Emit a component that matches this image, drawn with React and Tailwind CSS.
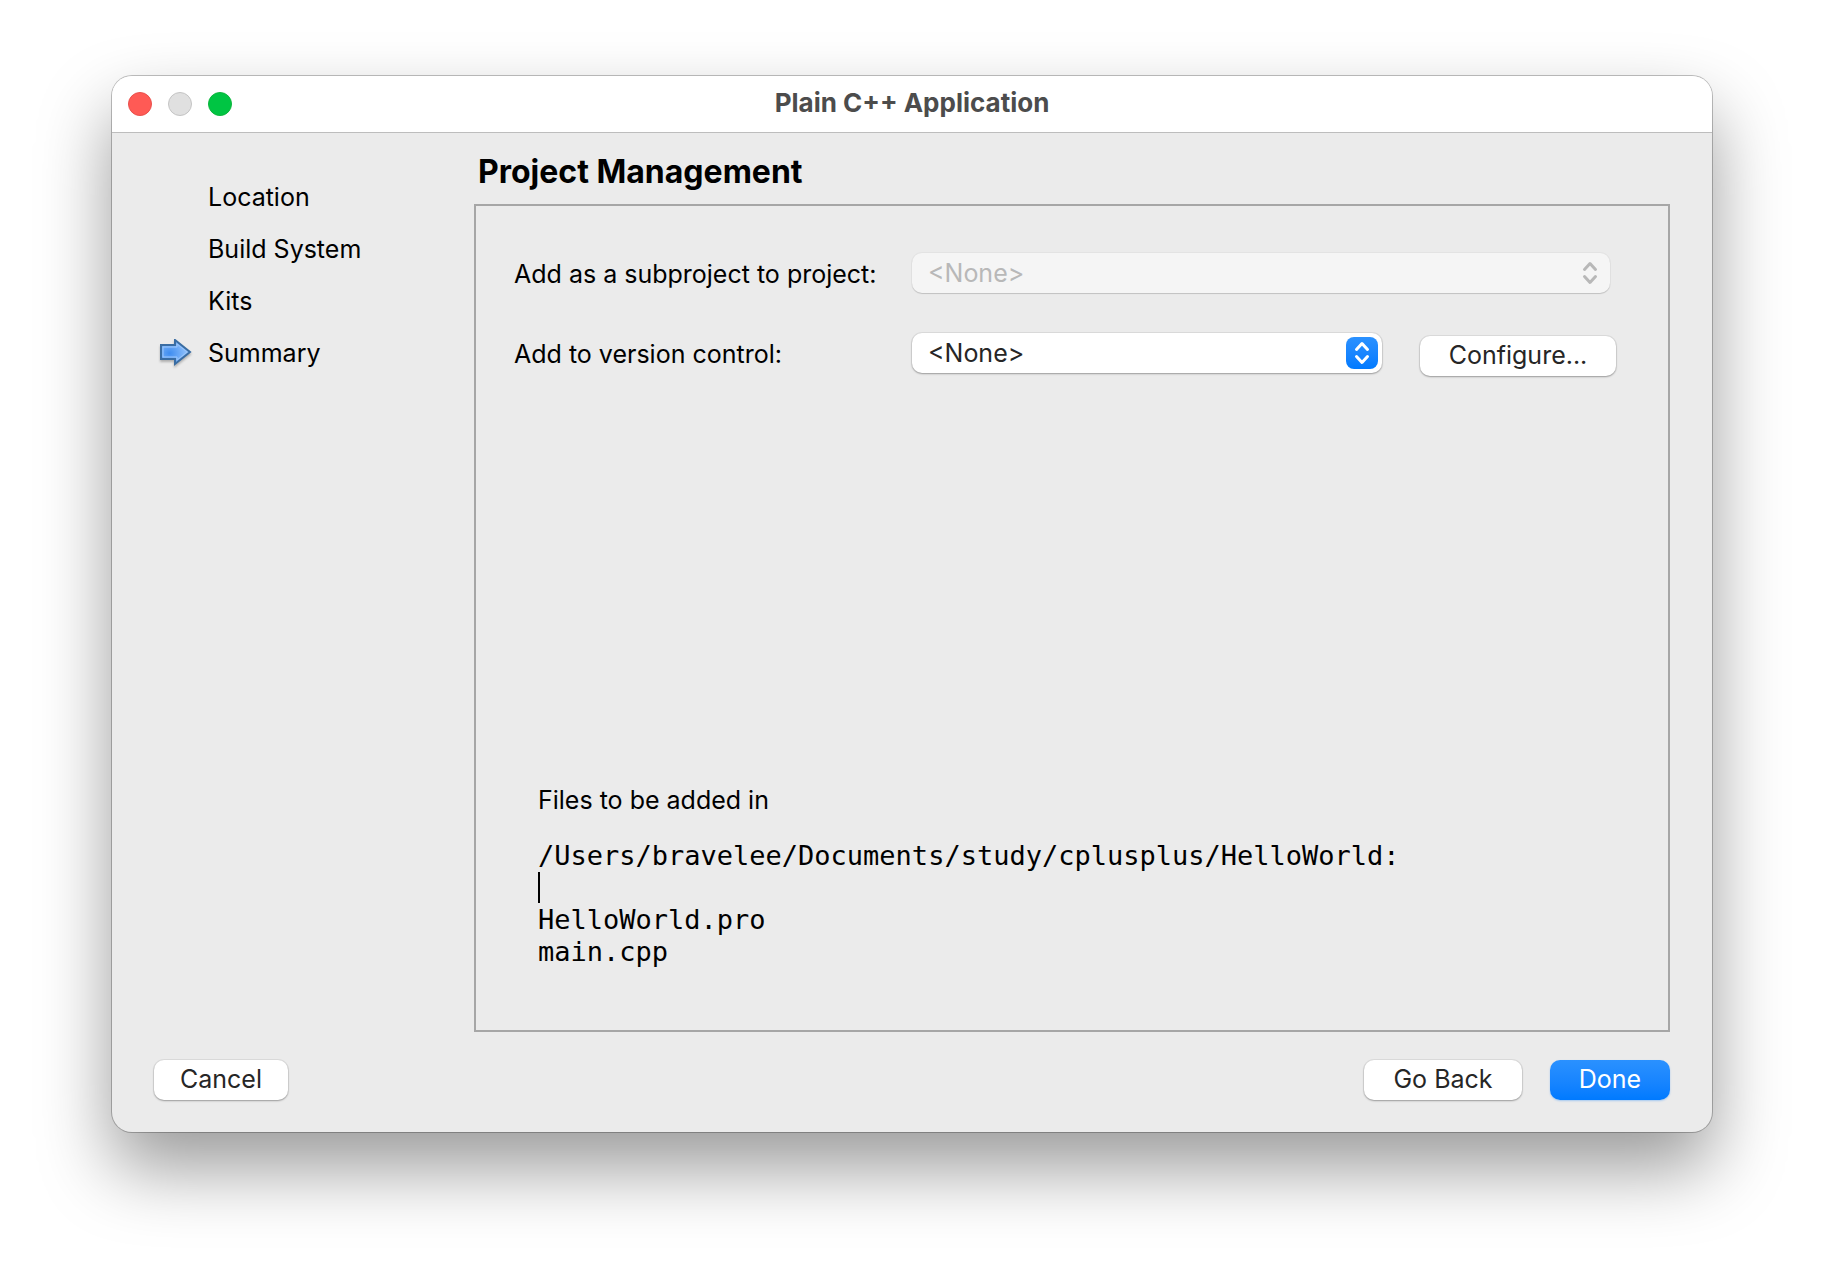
import { useState } from "react";

const STEPS = ["Location", "Build System", "Kits", "Summary"];

const FILES = ["HelloWorld.pro", "main.cpp"];

function StepArrow() {
  return (
    <svg viewBox="0 0 32 28" className="h-7 w-8 drop-shadow-[0_2px_1px_rgba(0,0,0,0.25)]" aria-hidden="true">
      <defs>
        <radialGradient id="arrowFill" cx="0.3" cy="0.55" r="0.6">
          <stop offset="0" stopColor="#3f8df0" />
          <stop offset="1" stopColor="#8fc0fb" />
        </radialGradient>
      </defs>
      <path d="M1 6H15V1L30 13L15 25V20H1Z" fill="url(#arrowFill)" stroke="#3a6da3" strokeWidth="2" />
      <path d="M3 8H17V5L27 13L17 21V18H3Z" fill="none" stroke="#9cc6fa" strokeWidth="1" />
    </svg>
  );
}

function Chevrons() {
  return (
    <svg
      viewBox="0 0 32 32"
      className="h-8 w-8"
      fill="none"
      stroke="currentColor"
      strokeWidth="3"
      strokeLinecap="round"
      strokeLinejoin="round"
      aria-hidden="true"
    >
      <path d="M10.500 12.500L16 6.500L21.500 12.500" />
      <path d="M10.500 19.500L16 25.500L21.500 19.500" />
    </svg>
  );
}

function PopupSelect({ id, value, onChange, disabled }) {
  return (
    <div className="relative flex-1">
      <select
        id={id}
        value={value}
        onChange={onChange}
        disabled={disabled}
        className="block h-10 w-full appearance-none rounded-[10px] bg-white pr-10 pl-4 text-[25px] text-[#262626] shadow-[0_0_0_1px_rgba(0,0,0,0.06),0_1px_2px_rgba(0,0,0,0.3)] disabled:bg-[#f5f5f5] disabled:text-[#b8b8b8] disabled:opacity-100 disabled:shadow-[0_0_0_1px_rgba(0,0,0,0.03),0_1px_1px_rgba(0,0,0,0.15)]"
      >
        <option>&lt;None&gt;</option>
      </select>
      <span
        className={
          disabled
            ? "pointer-events-none absolute top-1 right-1 text-[#b8b8b8]"
            : "pointer-events-none absolute top-1 right-1 rounded-lg bg-linear-to-b from-[#2a91ff] to-[#007aff] text-white"
        }
      >
        <Chevrons />
      </span>
    </div>
  );
}

function PushButton({ children, className }) {
  return (
    <button type="button" className={`h-10 rounded-[10px] pb-[3px] text-[25px] ${className}`}>
      {children}
    </button>
  );
}

export default function App() {
  const [vcs, setVcs] = useState("<None>");

  return (
    <div className="flex min-h-screen bg-white px-28 pt-[76px] pb-[148px] font-['Inter',sans-serif] text-[25px] leading-8 text-black">
      <div className="flex flex-1 flex-col overflow-hidden rounded-[20px] bg-[#ebebeb] shadow-[0_0_0_1px_rgba(0,0,0,0.24),0_36px_72px_rgba(0,0,0,0.4)]">
        <header className="grid h-[57px] grid-cols-[1fr_auto_1fr] items-center border-b border-[#bdbdbd] bg-white px-4">
          <div className="flex gap-4">
            <button type="button" aria-label="Close" className="h-6 w-6 rounded-full border border-[#e9504c] bg-[#ff5a55]" />
            <button type="button" aria-label="Minimize" className="h-6 w-6 rounded-full border border-[#c4c4c4] bg-[#e0e0e0]" />
            <button type="button" aria-label="Zoom" className="h-6 w-6 rounded-full border border-[#0cb53c] bg-[#00c543]" />
          </div>
          <h1 className="pb-[3px] text-[26px] font-bold text-[#4c4c4c]">Plain C++ Application</h1>
        </header>

        <div className="flex flex-1">
          <nav className="w-[362px] shrink-0 pt-[38px] pl-12">
            <ol>
              {STEPS.map((step) => (
                <li key={step} className="flex h-[52px] items-center gap-4">
                  <span className="w-8">{step === "Summary" && <StepArrow />}</span>
                  {step}
                </li>
              ))}
            </ol>
          </nav>

          <main className="flex flex-1 flex-col pt-[19px] pr-[42px]">
            <h2 className="pb-3 pl-1 text-[32px] leading-10 font-bold">Project Management</h2>
            <section className="flex flex-1 flex-col justify-between border-2 border-[#a6a6a6] pt-[47px] pr-[52px] pb-[62px] pl-[38px]">
              <form className="grid grid-cols-[398px_1fr] gap-y-[37px]">
                <label htmlFor="project" className="leading-[43px]">
                  Add as a subproject to project:
                </label>
                <div className="flex pr-[6px]">
                  <PopupSelect id="project" value="<None>" disabled />
                </div>
                <label htmlFor="vcs" className="leading-[43px]">
                  Add to version control:
                </label>
                <div className="flex h-[43px] items-start gap-[38px]">
                  <PopupSelect id="vcs" value={vcs} onChange={(e) => setVcs(e.target.value)} />
                  <PushButton className="w-[196px] self-end bg-white text-[#262626] shadow-[0_0_0_1px_rgba(0,0,0,0.06),0_1px_2px_rgba(0,0,0,0.3)]">
                    Configure...
                  </PushButton>
                </div>
              </form>

              <div className="pl-6">
                <p>Files to be added in</p>
                <div className="pt-6 font-['DejaVu_Sans_Mono',monospace] text-[27px]">
                  <p>/Users/bravelee/Documents/study/cplusplus/HelloWorld:</p>
                  <div className="h-8 w-[2px] border-b border-[#ebebeb] bg-black" />
                  {FILES.map((file) => (
                    <p key={file}>{file}</p>
                  ))}
                </div>
              </div>
            </section>
          </main>
        </div>

        <footer className="flex gap-7 px-[42px] pt-7 pb-8">
          <PushButton className="mr-auto w-[134px] bg-white text-[#262626] shadow-[0_0_0_1px_rgba(0,0,0,0.06),0_1px_2px_rgba(0,0,0,0.3)]">
            Cancel
          </PushButton>
          <PushButton className="w-[158px] bg-white text-[#262626] shadow-[0_0_0_1px_rgba(0,0,0,0.06),0_1px_2px_rgba(0,0,0,0.3)]">
            Go Back
          </PushButton>
          <PushButton className="w-[120px] bg-linear-to-b from-[#2a91ff] to-[#007aff] text-white shadow-[0_1px_2px_rgba(0,122,255,0.3)]">
            Done
          </PushButton>
        </footer>
      </div>
    </div>
  );
}
